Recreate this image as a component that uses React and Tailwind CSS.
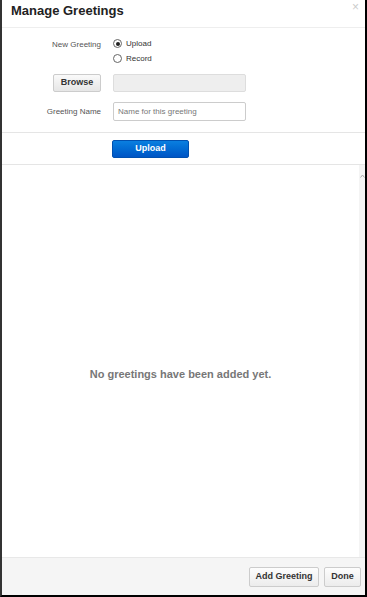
export default function App() {
  return (
    <div
      className="w-[367px] h-[597px] bg-white flex flex-col border-l-2 border-r-2 border-b-2 border-l-[#333] border-r-black border-b-black text-[#333] overflow-hidden"
      style={{ fontFamily: '"Liberation Sans", Arial, sans-serif' }}
    >
      {/* header */}
      <div className="h-[28px] shrink-0 flex items-start justify-between border-b border-[#eee] pl-[9px] pr-[6px]">
        <h1 className="text-[13px] font-bold text-[#222] leading-none mt-[4px]">
          Manage Greetings
        </h1>
        <span className="text-[12px] text-[#ccc] leading-none mt-[1px]">×</span>
      </div>

      {/* form */}
      <div className="shrink-0 pt-[11px] pb-[11px] border-b border-[#e5e5e5]">
        <div className="flex">
          <div className="w-[99px] text-right text-[8px] text-[#555] pt-[2px] leading-none">
            New Greeting
          </div>
          <div className="ml-[12px] flex flex-col gap-[6px]">
            <label className="flex items-center gap-[4px] text-[8px] leading-none">
              <span className="w-[9px] h-[9px] rounded-full border border-[#666] flex items-center justify-center">
                <span className="w-[4px] h-[4px] rounded-full bg-[#222]" />
              </span>
              Upload
            </label>
            <label className="flex items-center gap-[4px] text-[8px] leading-none">
              <span className="w-[9px] h-[9px] rounded-full border border-[#666]" />
              Record
            </label>
          </div>
        </div>

        <div className="flex items-center mt-[11px]">
          <div className="w-[99px] flex justify-end">
            <button className="w-[48px] h-[18px] rounded-[2px] border border-[#ccc] bg-gradient-to-b from-[#fafafa] to-[#e6e6e6] text-[9px] font-bold text-[#333]">
              Browse
            </button>
          </div>
          <div className="ml-[12px] w-[133px] h-[18px] rounded-[2px] border border-[#ddd] bg-[#eee]" />
        </div>

        <div className="flex items-center mt-[10px]">
          <div className="w-[99px] text-right text-[8px] text-[#555] leading-none">
            Greeting Name
          </div>
          <div className="ml-[12px] w-[133px] h-[19px] rounded-[2px] border border-[#ccc] flex items-center px-[4px] text-[8px] text-[#777]">
            Name for this greeting
          </div>
        </div>
      </div>

      {/* upload */}
      <div className="shrink-0 h-[32px] border-b border-[#e5e5e5] flex items-center">
        <button className="ml-[110px] w-[77px] h-[18px] rounded-[2px] bg-gradient-to-b from-[#0b7fe0] to-[#0055c5] border border-[#0050b0] text-white text-[9px] font-bold">
          Upload
        </button>
      </div>

      {/* list area */}
      <div className="flex-1 flex min-h-0">
        <div className="flex-1 flex items-center justify-center">
          <p className="text-[11px] font-bold text-[#777] mt-[26px]">
            No greetings have been added yet.
          </p>
        </div>
        <div className="w-[6px] bg-[#f4f4f4] flex justify-center pt-[9px]">
          <svg width="5" height="4" viewBox="0 0 5 4">
            <path d="M0.5 3.5 L2.5 1 L4.5 3.5" fill="none" stroke="#aaa" strokeWidth="1" />
          </svg>
        </div>
      </div>

      {/* footer */}
      <div className="shrink-0 h-[38px] bg-[#f5f5f5] border-t border-[#e8e8e8] flex items-center justify-end gap-[5px] pr-[4px]">
        <button className="w-[70px] h-[20px] rounded-[2px] border border-[#ccc] bg-gradient-to-b from-[#fdfdfd] to-[#ececec] text-[9px] font-bold text-[#333]">
          Add Greeting
        </button>
        <button className="w-[37px] h-[20px] rounded-[2px] border border-[#ccc] bg-gradient-to-b from-[#fdfdfd] to-[#ececec] text-[9px] font-bold text-[#333]">
          Done
        </button>
      </div>
    </div>
  );
}
